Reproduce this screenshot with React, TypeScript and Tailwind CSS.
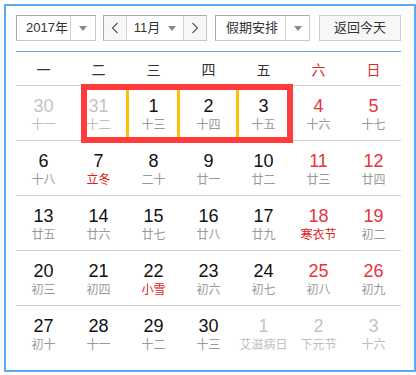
import React from "react";

type Day = { n: number; l: string; other?: boolean; weekend?: boolean; fest?: boolean };

const rows: Day[][] = [
  [
    { n: 30, l: "十一", other: true },
    { n: 31, l: "十二", other: true },
    { n: 1, l: "十三" },
    { n: 2, l: "十四" },
    { n: 3, l: "十五" },
    { n: 4, l: "十六", weekend: true },
    { n: 5, l: "十七", weekend: true },
  ],
  [
    { n: 6, l: "十八" },
    { n: 7, l: "立冬", fest: true },
    { n: 8, l: "二十" },
    { n: 9, l: "廿一" },
    { n: 10, l: "廿二" },
    { n: 11, l: "廿三", weekend: true },
    { n: 12, l: "廿四", weekend: true },
  ],
  [
    { n: 13, l: "廿五" },
    { n: 14, l: "廿六" },
    { n: 15, l: "廿七" },
    { n: 16, l: "廿八" },
    { n: 17, l: "廿九" },
    { n: 18, l: "寒衣节", weekend: true, fest: true },
    { n: 19, l: "初二", weekend: true },
  ],
  [
    { n: 20, l: "初三" },
    { n: 21, l: "初四" },
    { n: 22, l: "小雪", fest: true },
    { n: 23, l: "初六" },
    { n: 24, l: "初七" },
    { n: 25, l: "初八", weekend: true },
    { n: 26, l: "初九", weekend: true },
  ],
  [
    { n: 27, l: "初十" },
    { n: 28, l: "十一" },
    { n: 29, l: "十二" },
    { n: 30, l: "十三" },
    { n: 1, l: "艾滋病日", other: true },
    { n: 2, l: "下元节", other: true },
    { n: 3, l: "十六", other: true },
  ],
];

const weekdays = ["一", "二", "三", "四", "五", "六", "日"];

const CJK = "font-['Liberation_Sans','Noto_Sans_CJK_SC',sans-serif]";

function Caret() {
  return (
    <span className="block w-0 h-0 border-l-[4px] border-r-[4px] border-t-[5px] border-l-transparent border-r-transparent border-t-[#8a8a8a]" />
  );
}

function Chevron({ dir }: { dir: "l" | "r" }) {
  return (
    <svg width="8" height="12" viewBox="0 0 8 12">
      <path
        d={dir === "l" ? "M6.5 1 L1.5 6 L6.5 11" : "M1.5 1 L6.5 6 L1.5 11"}
        fill="none"
        stroke="#5a5a6a"
        strokeWidth="1.2"
      />
    </svg>
  );
}

const boxBorder = "border border-[#c8c8c8] border-t-[#a9a9a9] border-l-[#a9a9a9]";

export default function App() {
  return (
    <div className={`${CJK} bg-white w-[416px] h-[375px] pt-[4px] pl-[4px]`}>
      <div className="relative w-[412px] h-[368px] border-2 border-[#5aaaf6] bg-white pl-[10px] pt-[9px]">
        {/* header */}
        <div className="flex h-[26px] w-[385px] text-[13px] text-[#333]">
          <div className={`flex w-[80px] h-[26px] bg-white ${boxBorder}`}>
            <div className="flex-1 flex items-center pl-[9px]">2017年</div>
            <div className="w-[25px] flex items-center justify-center border-l border-[#d0d0d0]">
              <Caret />
            </div>
          </div>
          <div className={`ml-[7px] flex w-[104px] h-[26px] bg-white ${boxBorder}`}>
            <div className="w-[22px] flex items-center justify-center bg-[#f7f7f7]">
              <Chevron dir="l" />
            </div>
            <div className="flex-1 flex items-center justify-center gap-[8px] border-l border-r border-[#d0d0d0]">
              <span>11月</span>
              <Caret />
            </div>
            <div className="w-[22px] flex items-center justify-center bg-[#f7f7f7]">
              <Chevron dir="r" />
            </div>
          </div>
          <div className={`ml-[8px] flex w-[95px] h-[26px] bg-white ${boxBorder}`}>
            <div className="flex-1 flex items-center pl-[10px]">假期安排</div>
            <div className="w-[24px] flex items-center justify-center border-l border-[#d0d0d0]">
              <Caret />
            </div>
          </div>
          <div className="ml-[9px] flex w-[82px] h-[26px] items-center justify-center bg-[#f7f7f7] border border-[#cfcfcf]">
            返回今天
          </div>
        </div>

        {/* table */}
        <div className="mt-[10px] w-[385px] border-t border-[#5ea9f0]">
          <div className="grid grid-cols-7 h-[34px] border-b border-[#cfcfcf]">
            {weekdays.map((w, i) => (
              <div
                key={w}
                className={`text-center pt-[8px] text-[14px] leading-[20px] ${i >= 5 ? "text-[#e02a2a]" : "text-[#333]"}`}
              >
                {w}
              </div>
            ))}
          </div>
          {rows.map((r, ri) => (
            <div
              key={ri}
              className={`grid grid-cols-7 h-[55px] ${ri < rows.length - 1 ? "border-b border-[#cfcfcf]" : ""}`}
            >
              {r.map((d, di) => {
                const numColor = d.other
                  ? "text-[#c4c4c4]"
                  : d.weekend
                  ? "text-[#e8333a]"
                  : "text-[#111]";
                const lunColor = d.other
                  ? "text-[#bdbdbd]"
                  : d.fest
                  ? "text-[#e02020]"
                  : "text-[#999]";
                return (
                  <div key={di} className="flex flex-col items-center pt-[10px]">
                    <div className={`text-[18px] leading-[20px] font-['Liberation_Sans',sans-serif] ${numColor}`}>
                      {d.n}
                    </div>
                    <div className={`text-[12px] leading-[16px] mt-[1px] whitespace-nowrap ${lunColor}`}>
                      {d.l}
                    </div>
                  </div>
                );
              })}
            </div>
          ))}
        </div>

        {/* annotation overlay */}
        <div className="absolute left-[75px] top-[78px] w-[212px] h-[59px] border-[6px] border-[#ff3b3b] pointer-events-none" />
        <div className="absolute left-[120px] top-[84px] w-[3px] h-[47px] bg-[#ffc000]" />
        <div className="absolute left-[171px] top-[84px] w-[3px] h-[47px] bg-[#ffc000]" />
        <div className="absolute left-[230px] top-[84px] w-[3px] h-[47px] bg-[#ffc000]" />
      </div>
    </div>
  );
}
